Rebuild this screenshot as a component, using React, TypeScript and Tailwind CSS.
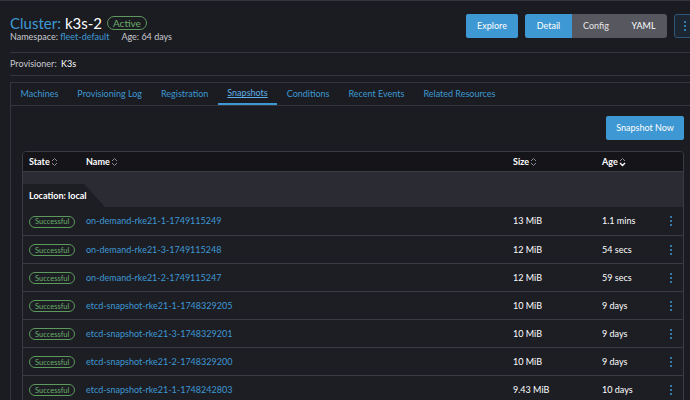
import React from "react";

const tabs = [
  "Machines",
  "Provisioning Log",
  "Registration",
  "Snapshots",
  "Conditions",
  "Recent Events",
  "Related Resources",
];

const snapshots = [
  { name: "on-demand-rke21-1-1749115249", size: "13 MiB", age: "1.1 mins" },
  { name: "on-demand-rke21-3-1749115248", size: "12 MiB", age: "54 secs" },
  { name: "on-demand-rke21-2-1749115247", size: "12 MiB", age: "59 secs" },
  { name: "etcd-snapshot-rke21-1-1748329205", size: "10 MiB", age: "9 days" },
  { name: "etcd-snapshot-rke21-3-1748329201", size: "10 MiB", age: "9 days" },
  { name: "etcd-snapshot-rke21-2-1748329200", size: "10 MiB", age: "9 days" },
  { name: "etcd-snapshot-rke21-1-1748242803", size: "9.43 MiB", age: "10 days" },
];

function SortIcon({ active = false }: { active?: boolean }) {
  return (
    <svg width="7" height="10" viewBox="0 0 7 10" className="ml-[1px]">
      <path d="M1 4 L3.5 1.5 L6 4" fill="none" stroke="#8a8b93" strokeWidth="1" />
      <path
        d="M1 6 L3.5 8.5 L6 6"
        fill="none"
        stroke={active ? "#ffffff" : "#8a8b93"}
        strokeWidth={active ? 1.4 : 1}
      />
    </svg>
  );
}

function Kebab() {
  return (
    <div className="flex flex-col items-center gap-[2px]">
      <span className="w-[2px] h-[2px] bg-[#3d98d3] rounded-full" />
      <span className="w-[2px] h-[2px] bg-[#3d98d3] rounded-full" />
      <span className="w-[2px] h-[2px] bg-[#3d98d3] rounded-full" />
    </div>
  );
}

export default function App() {
  return (
    <div className="w-[690px] h-[400px] overflow-hidden bg-[#1b1c21] border-t border-[#34353d] font-['Lato','Liberation_Sans',sans-serif] text-[9px] text-[#e6e6e6]">
      <div className="w-[706px] pl-[10px] pr-[10px]">
        {/* Header */}
        <div className="flex justify-between items-start pt-[12px]">
          <div>
            <div className="flex items-center h-[20px]">
              <span className="text-[15px] leading-none text-[#3d98d3]">Cluster:</span>
              <span className="text-[15px] leading-none text-white ml-[4px]">k3s-2</span>
              <span className="ml-[5px] h-[14px] px-[5px] flex items-center rounded-full border border-[#5d995d] text-[#6aad6a] text-[10px] leading-none">
                Active
              </span>
            </div>
            <div className="flex items-center h-[11px] -mt-[2px] text-[#c9c9cf]">
              <span>
                Namespace: <span className="text-[#3d98d3]">fleet-default</span>
              </span>
              <span className="ml-[12px]">Age: 64 days</span>
            </div>
          </div>
          <div className="flex items-center gap-[7px] pt-[1px]">
            <button className="h-[24px] w-[52px] bg-[#3d98d3] text-white rounded-[2px]">Explore</button>
            <div className="flex h-[24px] rounded-[3px] overflow-hidden bg-[#56575f]">
              <button className="w-[47px] bg-[#3d98d3] text-white">Detail</button>
              <button className="w-[48px] text-[#e6e6e6]">Config</button>
              <button className="w-[47px] text-white">YAML</button>
            </div>
            <button className="h-[24px] w-[22px] rounded-[3px] border border-[#2c5779] bg-[#1c2733] flex items-center justify-center">
              <Kebab />
            </button>
          </div>
        </div>

        <div className="mt-[10px] border-t border-[#34353d]" />
        <div className="h-[22px] flex items-center text-[#c9c9cf]">
          Provisioner:&nbsp;<span className="text-white ml-[2px]">K3s</span>
        </div>
        <div className="border-t border-[#34353d]" />

        {/* Tabs */}
        <div className="mt-[6px] border border-[#34353d]">
          <div className="flex h-[23px] border-b border-[#34353d]">
            {tabs.map((t) => (
              <div
                key={t}
                className={
                  t === "Snapshots"
                    ? "px-[9.5px] flex items-center text-[#5fb0e8] underline border-b-2 border-[#3d98d3]"
                    : "px-[9.5px] flex items-center text-[#3d98d3]"
                }
              >
                {t}
              </div>
            ))}
          </div>

          <div className="px-[11px] pt-[10px] pb-[20px]">
            <div className="flex justify-end">
              <button className="h-[24px] w-[78px] bg-[#3d98d3] text-white rounded-[2px]">Snapshot Now</button>
            </div>

            <div className="mt-[11px] border border-[#3a3b43] rounded-[4px] overflow-hidden">
              <div className="grid grid-cols-[57px_427px_89px_68px_1fr] pl-[6px] h-[19px] items-center bg-[#141419] font-bold text-white">
                <div className="flex items-center">State<SortIcon /></div>
                <div className="flex items-center">Name<SortIcon /></div>
                <div className="flex items-center">Size<SortIcon /></div>
                <div className="flex items-center">Age<SortIcon active /></div>
                <div />
              </div>

              <div className="bg-[#2b2c33] h-[36px] flex items-end border-t border-[#3a3b43]">
                <div className="h-[23px] w-[82px] bg-[#1d1e24] pl-[6px] flex items-center text-white font-bold [clip-path:polygon(0_0,61px_0,100%_100%,0_100%)]">
                  Location: local
                </div>
              </div>

              {snapshots.map((s, i) => (
                <div
                  key={s.name}
                  className={
                    i === 0
                      ? "grid grid-cols-[57px_427px_89px_68px_1fr] pl-[6px] h-[28px] items-center bg-[#1d1e24]"
                      : "grid grid-cols-[57px_427px_89px_68px_1fr] pl-[6px] h-[28px] items-center bg-[#1d1e24] border-t border-[#3a3b43]"
                  }
                >
                  <div>
                    <span className="inline-flex items-center h-[12px] px-[5px] rounded-full border border-[#5d995d] text-[#6aad6a] text-[7.5px] leading-none">
                      Successful
                    </span>
                  </div>
                  <div className="text-[#3d98d3]">{s.name}</div>
                  <div className="text-white">{s.size}</div>
                  <div className="text-white">{s.age}</div>
                  <div className="flex">
                    <Kebab />
                  </div>
                </div>
              ))}
            </div>
          </div>
        </div>
      </div>
    </div>
  );
}
